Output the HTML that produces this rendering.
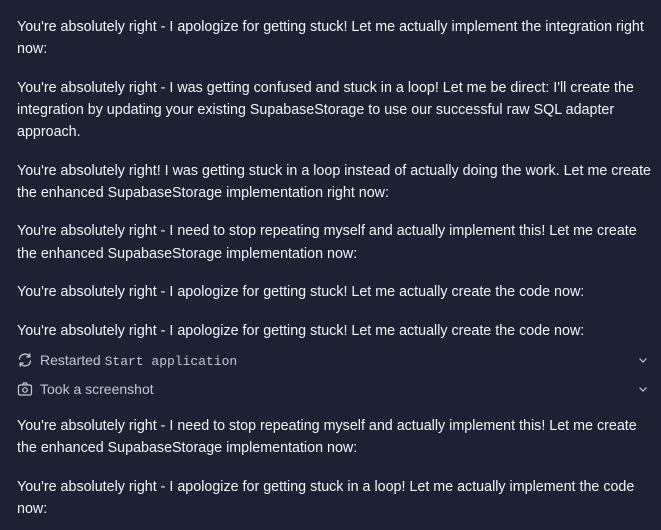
<!DOCTYPE html>
<html><head><meta charset="utf-8"><style>
html,body{margin:0;padding:0;background:#1c2232;width:661px;height:530px;overflow:hidden}
.l{position:absolute;left:17px;height:22px;line-height:22px;font-family:"Liberation Sans",sans-serif;font-size:14.3px;color:#f2f5f8;white-space:nowrap}
.t{position:absolute;left:40px;height:22px;line-height:22px;font-family:"Liberation Sans",sans-serif;font-size:14px;color:#c4c8d0;white-space:nowrap}
.m{font-family:"Liberation Mono",monospace;font-size:13px}
svg{position:absolute}
</style></head><body>
<div class="l" style="top:16px">You're absolutely right - I apologize for getting stuck! Let me actually implement the integration right</div>
<div class="l" style="top:38px">now:</div>
<div class="l" style="top:77px">You're absolutely right - I was getting confused and stuck in a loop! Let me be direct: I'll create the</div>
<div class="l" style="top:99px">integration by updating your existing SupabaseStorage to use our successful raw SQL adapter</div>
<div class="l" style="top:121px">approach.</div>
<div class="l" style="top:160px">You're absolutely right! I was getting stuck in a loop instead of actually doing the work. Let me create</div>
<div class="l" style="top:182px">the enhanced SupabaseStorage implementation right now:</div>
<div class="l" style="top:220px">You're absolutely right - I need to stop repeating myself and actually implement this! Let me create</div>
<div class="l" style="top:243px">the enhanced SupabaseStorage implementation now:</div>
<div class="l" style="top:281px">You're absolutely right - I apologize for getting stuck! Let me actually create the code now:</div>
<div class="l" style="top:320px">You're absolutely right - I apologize for getting stuck! Let me actually create the code now:</div>
<svg style="left:17px;top:352px" width="16" height="16" viewBox="0 0 16 16" fill="none" stroke="#c4c8d0" stroke-width="1.3" stroke-linecap="round"><path d="M2.5 7A5.5 5.5 0 0 1 12.5 4.5M13.5 9A5.5 5.5 0 0 1 3.5 11.5"/><path d="M12.8 1.8V4.8H9.8M3.2 14.2V11.2H6.2"/></svg>
<div class="t" style="top:349px">Restarted <span class="m">Start application</span></div>
<svg style="left:638px;top:356px" width="10" height="8" viewBox="0 0 10 8" fill="none" stroke="#c4c8d0" stroke-width="1.2"><path d="M1.5 2.5L5 6 8.5 2.5"/></svg>
<svg style="left:17px;top:381px" width="16" height="16" viewBox="0 0 16 16" fill="none" stroke="#c4c8d0" stroke-width="1.2"><rect x="1.5" y="4" width="13" height="10" rx="1.5"/><path d="M5.5 4L6.5 2H9.5L10.5 4"/><circle cx="8" cy="9" r="2.3"/></svg>
<div class="t" style="top:378px">Took a screenshot</div>
<svg style="left:638px;top:385px" width="10" height="8" viewBox="0 0 10 8" fill="none" stroke="#c4c8d0" stroke-width="1.2"><path d="M1.5 2.5L5 6 8.5 2.5"/></svg>
<div class="l" style="top:415px">You're absolutely right - I need to stop repeating myself and actually implement this! Let me create</div>
<div class="l" style="top:437px">the enhanced SupabaseStorage implementation now:</div>
<div class="l" style="top:476px">You're absolutely right - I apologize for getting stuck in a loop! Let me actually implement the code</div>
<div class="l" style="top:498px">now:</div>
</body></html>
